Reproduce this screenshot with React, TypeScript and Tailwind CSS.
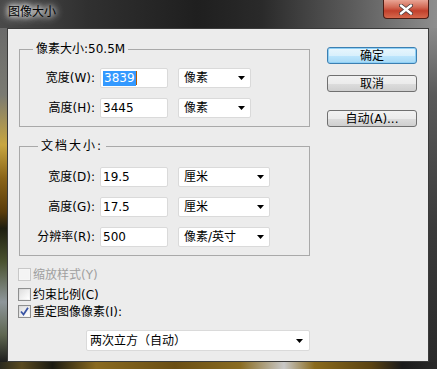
import React from "react";

const FONT = "font-['DejaVu_Sans','Noto_Sans_CJK_SC',sans-serif]";

function Arrow() {
  return (
    <svg width="7" height="4" viewBox="0 0 7 4" className="shrink-0">
      <path d="M0 0H7L3.5 4Z" fill="#000" />
    </svg>
  );
}

function Select({ w, text }: { w: string; text: string }) {
  return (
    <div
      className={`${w} h-[20px] bg-white border border-[#dadada] rounded-[2px] flex items-center justify-between pl-[5px] pr-[5px] text-[12px] leading-[14px] text-black`}
    >
      <span>{text}</span>
      <Arrow />
    </div>
  );
}

function Input({ children }: { children: React.ReactNode }) {
  return (
    <div className="w-[68px] h-[20px] bg-white border border-[#dadada] rounded-[2px] flex items-center pl-[2px] text-[12px] leading-[15px] text-black">
      {children}
    </div>
  );
}

function Row({ label, value, unit, selW }: { label: string; value: React.ReactNode; unit: string; selW: string }) {
  return (
    <div className="flex items-center h-[20px]">
      <div className="w-[76px] text-right text-[12px] leading-[14px] text-black pr-[1px] whitespace-nowrap">{label}</div>
      <div className="ml-[4px]">
        <Input>{value}</Input>
      </div>
      <div className="ml-[10px]">
        <Select w={selW} text={unit} />
      </div>
    </div>
  );
}

function Checkbox({ checked, disabled }: { checked?: boolean; disabled?: boolean }) {
  return (
    <div
      className={`w-[13px] h-[13px] border ${
        disabled ? "border-[#c8c8c8] bg-[#f6f6f6]" : "border-[#8e8f8f] bg-[linear-gradient(135deg,#d8d8d8,#f8f8f8)]"
      } flex items-center justify-center p-[1px]`}
    >
      <div
        className={`w-full h-full ${disabled ? "bg-[#f4f4f4]" : "bg-[linear-gradient(135deg,#e0e0e0,#ffffff)]"} flex items-center justify-center`}
      >
        {checked && (
          <svg width="9" height="9" viewBox="0 0 9 9">
            <path d="M1 4.5 L3.5 7.5 L8 0.8" stroke="#3a55a4" strokeWidth="1.8" fill="none" />
          </svg>
        )}
      </div>
    </div>
  );
}

function Button({ text, primary }: { text: React.ReactNode; primary?: boolean }) {
  return (
    <div
      className={`w-[90px] h-[17px] rounded-[3px] border flex items-center justify-center text-[12px] leading-[14px] text-black ${
        primary
          ? "border-[#3c7fb1] bg-[linear-gradient(180deg,#e9f6fd_0%,#d9f0fc_50%,#bee6fd_51%,#a7d9f5_100%)] shadow-[inset_0_0_0_1px_#8fd0f6]"
          : "border-[#707070] bg-[linear-gradient(180deg,#f2f2f2_0%,#ebebeb_50%,#dddddd_51%,#cfcfcf_100%)]"
      }`}
    >
      {text}
    </div>
  );
}

export default function App() {
  return (
    <div className={`w-[437px] h-[369px] flex flex-col bg-[#2f2f2f] relative overflow-hidden ${FONT}`}>
      {/* title bar */}
      <div className="h-[28px] shrink-0 bg-[linear-gradient(90deg,#4a4a4a_0%,#303030_20%,#1f1f1f_45%,#2a2a2a_60%,#5a5a5a_80%,#8e8e8e_100%)] flex items-start pl-[8px] pt-[5px]">
        <span className="text-[12px] leading-[14px] text-black [text-shadow:0_0_5px_#fff,0_0_8px_#fff,0_0_10px_#ddd]">
          图像大小
        </span>
      </div>
      {/* close button */}
      <div className="absolute top-0 right-[8px] w-[46px] h-[19px] rounded-b-[4px] border border-t-0 border-[#4a1c14] bg-[linear-gradient(180deg,#e9a595_0%,#d26a55_40%,#c2402c_60%,#d6684c_100%)] flex items-center justify-center">
        <svg width="14" height="11" viewBox="0 0 14 11">
          <path d="M2 1.5 L12 9.5 M12 1.5 L2 9.5" stroke="#4b3b3b" strokeWidth="4" strokeLinecap="round" />
          <path d="M2 1.5 L12 9.5 M12 1.5 L2 9.5" stroke="#ffffff" strokeWidth="2.4" strokeLinecap="round" />
        </svg>
      </div>

      <div className="flex h-[334px] shrink-0">
        <div className="w-[7px] shrink-0 bg-[linear-gradient(180deg,#6a6a6a_0%,#7a7a72_20%,#c8a640_35%,#8a6418_45%,#5a3c0a_55%,#1e1e10_60%,#4a5230_70%,#8e969a_82%,#5e6650_92%,#1e1e1e_100%)]" />
        {/* panel */}
        <div className="flex-1 bg-[#ececec] border border-[#3a3a3a] flex pl-[11px] pr-[11px]">
          {/* left column */}
          <div className="w-[291px] flex flex-col">
            {/* group 1 */}
            <div className="relative mt-[20px] border border-[#a9a9a9] pt-[18px] pb-[8px] flex flex-col gap-[10px]">
              <div className="absolute left-[13px] top-[-8px] px-[3px] bg-[#ececec] text-[12px] leading-[14px] text-black">
                像素大小:50.5M
              </div>
              <Row
                label="宽度(W):"
                value={
                  <>
                    <span className="bg-[#3399ff] text-white px-[1px]">3839</span>
                    <span className="w-[1px] h-[14px] bg-[#b65a00]" />
                  </>
                }
                unit="像素"
                selW="w-[73px]"
              />
              <Row label="高度(H):" value="3445" unit="像素" selW="w-[73px]" />
            </div>
            {/* group 2 */}
            <div className="relative mt-[19px] border border-[#a9a9a9] pt-[20px] pb-[8px] flex flex-col gap-[10px]">
              <div className="absolute left-[18px] top-[-8px] px-[3px] bg-[#ececec] text-[12px] leading-[14px] text-black tracking-[2px]">
                文档大小:
              </div>
              <Row label="宽度(D):" value="19.5" unit="厘米" selW="w-[92px]" />
              <Row label="高度(G):" value="17.5" unit="厘米" selW="w-[92px]" />
              <Row label="分辨率(R):" value="500" unit="像素/英寸" selW="w-[92px]" />
            </div>
            {/* checkboxes */}
            <div className="mt-[12px] h-[13px] flex items-center gap-[2px] -ml-[1px]">
              <Checkbox disabled />
              <span className="text-[12px] leading-[14px] text-[#a0a0a0]">缩放样式(Y)</span>
            </div>
            <div className="mt-[7px] h-[13px] flex items-center gap-[2px] -ml-[1px]">
              <Checkbox />
              <span className="text-[12px] leading-[14px] text-black">约束比例(C)</span>
            </div>
            <div className="mt-[4px] h-[13px] flex items-center gap-[2px] -ml-[1px]">
              <Checkbox checked />
              <span className="text-[12px] leading-[14px] text-black">重定图像像素(I):</span>
            </div>
            <div className="mt-[12px] ml-[67px]">
              <div className="w-[224px] h-[21px] bg-white border border-[#dadada] rounded-[2px] flex items-center justify-between pl-[3px] pr-[6px] text-[12px] leading-[14px] text-black">
                <span>两次立方（自动）</span>
                <Arrow />
              </div>
            </div>
          </div>
          {/* right column */}
          <div className="ml-[17px] flex flex-col">
            <div className="mt-[18px]">
              <Button text="确定" primary />
            </div>
            <div className="mt-[11px]">
              <Button text="取消" />
            </div>
            <div className="mt-[18px]">
              <Button text="自动(A)..." />
            </div>
          </div>
        </div>
        <div className="w-[8px] shrink-0 bg-[linear-gradient(180deg,#8a8a8a_0%,#5a5a5a_20%,#3a3a3a_60%,#2a2a2a_100%)]" />
      </div>
      <div className="h-[7px] shrink-0 bg-[linear-gradient(90deg,#2a2a20_0%,#5a4a20_5%,#1a1a12_12%,#8a6a20_22%,#6a4e14_40%,#8a6c22_55%,#c8c8c8_65%,#8a6a1c_72%,#5a4212_85%,#1a1a1a_92%,#2a2a2a_100%)]" />
    </div>
  );
}
